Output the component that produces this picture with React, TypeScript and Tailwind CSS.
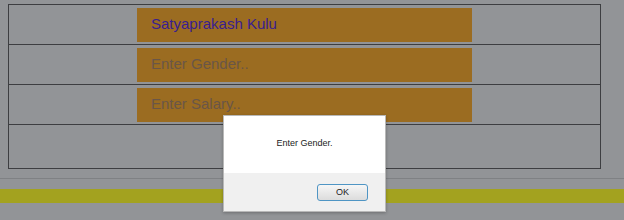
import React from 'react';

const rows = [
  { value: 'Satyaprakash Kulu', placeholder: '' },
  { value: '', placeholder: 'Enter Gender..' },
  { value: '', placeholder: 'Enter Salary..' },
];

const App: React.FC = () => {
  return (
    <div className="relative w-[624px] h-[220px] overflow-hidden bg-[#929497] font-['Liberation_Sans',Arial,sans-serif]">
      {/* form table */}
      <div className="pt-[4px] pl-[8px]">
        <div className="w-[593px] border border-[#3d3e41]">
          {rows.map((r, i) => (
            <div key={i} className="h-[40px] border-b border-[#3d3e41] flex items-center pl-[128px]">
              <div className="w-[335px] h-[34px] bg-[#9b6c21] flex items-center pl-[14px] text-[15px]">
                {r.value ? (
                  <span className="text-[#382090]">{r.value}</span>
                ) : (
                  <span className="text-[#6a5647]">{r.placeholder}</span>
                )}
              </div>
            </div>
          ))}
          <div className="h-[43px]" />
        </div>
      </div>

      {/* footer stripe */}
      <div className="mt-[9px] h-px bg-[#7f8184]" />
      <div className="mt-[10px] h-[14px] bg-[#a3a21f]" />

      {/* alert dialog */}
      <div className="absolute left-[223px] top-[115px] w-[163px] h-[97px] bg-white border border-[#b8b8b8] flex flex-col shadow-[0_1px_3px_rgba(0,0,0,0.25)]">
        <div className="flex-1 flex items-center justify-center text-[9px] text-[#222] pb-[2px]">
          Enter Gender.
        </div>
        <div className="h-[38px] bg-[#f0f0f0] flex items-center justify-end pr-[17px]">
          <button className="w-[51px] h-[17px] rounded-[3px] border border-[#4f95c4] bg-gradient-to-b from-[#f6f6f6] to-[#dcdcdc] text-[9px] text-[#222] leading-none">
            OK
          </button>
        </div>
      </div>
    </div>
  );
};

export default App;
